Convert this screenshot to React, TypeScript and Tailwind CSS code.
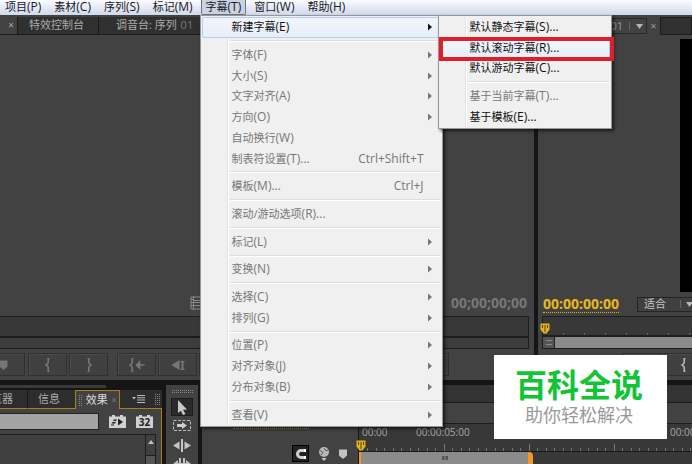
import type { ReactNode } from "react";
import clsx from "clsx";

interface Item {
  label: string;
  accel: string;
  more?: boolean;
  shortcut?: string;
  sub?: boolean;
  enabled?: boolean;
  hot?: boolean;
}

const MENUS = [
  ["项目", "P"],
  ["素材", "C"],
  ["序列", "S"],
  ["标记", "M"],
  ["字幕", "T"],
  ["窗口", "W"],
  ["帮助", "H"],
];

// null is a separator line
const TITLE_MENU: (Item | null)[] = [
  { label: "新建字幕", accel: "E", sub: true, enabled: true, hot: true },
  null,
  { label: "字体", accel: "F", sub: true },
  { label: "大小", accel: "S", sub: true },
  { label: "文字对齐", accel: "A", sub: true },
  { label: "方向", accel: "O", sub: true },
  { label: "自动换行", accel: "W" },
  { label: "制表符设置", accel: "T", more: true, shortcut: "Ctrl+Shift+T" },
  null,
  { label: "模板", accel: "M", more: true, shortcut: "Ctrl+J" },
  null,
  { label: "滚动/游动选项", accel: "R", more: true },
  null,
  { label: "标记", accel: "L", sub: true },
  null,
  { label: "变换", accel: "N", sub: true },
  null,
  { label: "选择", accel: "C", sub: true },
  { label: "排列", accel: "G", sub: true },
  null,
  { label: "位置", accel: "P", sub: true },
  { label: "对齐对象", accel: "J", sub: true },
  { label: "分布对象", accel: "B", sub: true },
  null,
  { label: "查看", accel: "V", sub: true },
];

const NEW_MENU: (Item | null)[] = [
  { label: "默认静态字幕", accel: "S", more: true, enabled: true },
  { label: "默认滚动字幕", accel: "R", more: true, enabled: true, hot: true },
  { label: "默认游动字幕", accel: "C", more: true, enabled: true },
  null,
  { label: "基于当前字幕", accel: "T", more: true },
  { label: "基于模板", accel: "E", more: true, enabled: true },
];

function MenuList({ items, className }: { items: (Item | null)[]; className: string }) {
  return (
    <div
      role="menu"
      className={clsx(
        "absolute flex flex-col border border-[#979797] bg-[#f0f0f0] p-px shadow-[2px_2px_3px_rgba(0,0,0,0.6)]",
        className
      )}
    >
      <div className="absolute inset-y-px left-[26px] w-[2px] border-l border-[#e2e2e2] bg-white" />
      {items.map((item, i) =>
        item ? (
          <button
            key={i}
            role="menuitem"
            disabled={!item.enabled}
            className={clsx(
              "relative flex flex-1 items-center rounded-xs border pr-2 pl-[29px] text-[11px] leading-4 whitespace-nowrap",
              item.enabled ? "text-[#111]" : "text-[#777]",
              item.hot ? "border-[#b4cfec] bg-linear-to-b from-[#f2f6fb] to-[#e6eef8]" : "border-transparent"
            )}
          >
            <span>{item.label}</span>
            <span className="text-xs">
              ({item.accel}){item.more && "..."}
            </span>
            {item.shortcut && <span className="mr-2 ml-auto text-xs">{item.shortcut}</span>}
            {item.sub && (
              <svg viewBox="0 0 4 8" className="ml-auto h-2 w-1 fill-current">
                <path d="M0 0.5L4 4L0 7.5z" />
              </svg>
            )}
          </button>
        ) : (
          <div key={i} className="relative ml-7 flex h-[7px] shrink-0 items-center">
            <div className="h-[2px] w-full border-t border-[#dedede] bg-white" />
          </div>
        )
      )}
    </div>
  );
}

function MenuBar() {
  return (
    <nav className="relative z-10 flex h-[15px] gap-[3px] bg-linear-to-b from-[#fbfcfe] to-[#d0d8ec]">
      {MENUS.map(([label, key]) => (
        <div key={key} className="relative">
          <button
            className={clsx(
              "flex h-[15px] items-center rounded-b-xs border-x border-b px-1 text-[11px] leading-[14px] whitespace-nowrap text-[#16181f]",
              key === "T" ? "border-[#6d7484] bg-[#cbd2e2]" : "border-transparent"
            )}
          >
            {label}
            <span className="text-xs leading-[14px]">({key})</span>
          </button>
          {key === "T" && (
            <>
              <MenuList items={TITLE_MENU} className="top-[15px] -left-px h-[412px] w-[243px]" />
              <MenuList items={NEW_MENU} className="top-[15px] left-[237px] h-[114px] w-[174px]" />
              <div className="absolute top-[37px] left-[238px] h-[24px] w-[175px] border-4 border-[#dd1f2b]" />
            </>
          )}
        </div>
      ))}
    </nav>
  );
}

function TransportButton({ children, className, label }: { children?: ReactNode; className?: string; label: string }) {
  return (
    <button
      aria-label={label}
      className={clsx(
        "flex h-[23px] w-[39px] shrink-0 items-center justify-center border border-[#303030] bg-[#404040] shadow-[inset_1px_1px_0_#4b4b4b]",
        className
      )}
    >
      {children}
    </button>
  );
}

function Bracket({ flip, arrow, bright }: { flip?: boolean; arrow?: boolean; bright?: boolean }) {
  return (
    <svg
      viewBox="0 0 16 14"
      className={clsx("h-[14px] w-4 fill-none", bright ? "stroke-[#b5b5b5]" : "stroke-[#777]", flip && "-scale-x-100")}
      strokeWidth="1.6"
    >
      <path d={arrow ? "M4.5 0.5H3.2V5L1 7L3.2 9V13.5H4.5" : "M9.5 0.5H8.2V5L6 7L8.2 9V13.5H9.5"} />
      {arrow && <path d="M8 7H15.5M10.5 4L7.5 7L10.5 10z" className="fill-[#777]" />}
    </svg>
  );
}

function Marker({ className }: { className: string }) {
  return (
    <svg viewBox="0 0 8 10" className={className}>
      <path d="M0 0.5H8V6.5L4 10L0 6.5z" />
    </svg>
  );
}

function Playhead() {
  return (
    <svg viewBox="0 0 10 11" className="h-[11px] w-[10px]">
      <path d="M0.5 0.5H9.5V6.5L6.5 10.5H3.5L0.5 6.5z" fill="#e3b21c" />
      <path d="M2.5 2V5M5 2V9M7.5 2V5" stroke="#594408" />
    </svg>
  );
}

function SourceMonitor() {
  return (
    <section className="flex min-w-0 flex-col bg-[#424242]">
      <div className="mt-[2px] flex h-[18px] shrink-0 items-center border-b border-[#1c1c1c] bg-[#303030] text-[11px] text-[#aaa]">
        <div className="flex h-full w-[18px] items-center justify-end border-r border-[#1a1a1a] bg-[#424242] pr-[3px] text-[10px]">×</div>
        <div className="flex h-full w-[81px] items-center border-r border-[#1a1a1a] pl-[11px] whitespace-nowrap">特效控制台</div>
        <div className="pl-[17px] whitespace-nowrap">
          调音台: 序列 <span className="ml-px text-[#777]">01</span>
        </div>
      </div>
      <div className="flex flex-1 items-end justify-between pr-[7px] pb-[3px] pl-[190px]">
        <svg viewBox="0 0 12 14" className="mb-[3px] h-[14px] w-3 fill-none stroke-[#888]">
          <path d="M1 1H11.5V13H1zM3.5 0.5V13.5M0.5 3.5H3.5M0.5 6.5H11.5M0.5 9.5H3.5M3.5 4.5H11.5M3.5 9.5H11.5" />
        </svg>
        <span className="text-sm font-bold text-[#777]">00;00;00;00</span>
      </div>
      <div className="mr-[5px] h-[33px] shrink-0 border border-l-0 border-[#1e1e1e] bg-[#383838] pt-[19px]">
        <div className="h-3 border-t-2 border-[#1e1e1e] bg-[#3c3c3c]" />
      </div>
      <div className="flex h-[31px] shrink-0 gap-[2px] overflow-hidden pt-1">
        <TransportButton label="标记" className="-ml-[14px] pr-1">
          <Marker className="h-[10px] w-[9px] fill-[#777]" />
        </TransportButton>
        <TransportButton label="入点" className="ml-px">
          <Bracket />
        </TransportButton>
        <TransportButton label="出点">
          <Bracket flip />
        </TransportButton>
        <TransportButton label="跳转到入点" className="ml-[7px]">
          <Bracket arrow />
        </TransportButton>
        <TransportButton label="后退">
          <svg viewBox="0 0 14 10" className="h-[10px] w-[14px] fill-[#777]">
            <path d="M8.5 0V10L0.5 5zM9.5 1H13.5V2.2H12.5V8.8H13.5V10H9.5V8.8H10.5V2.2H9.5z" />
          </svg>
        </TransportButton>
        <TransportButton label="播放" className="mr-[3px] w-[250px] shrink" />
      </div>
    </section>
  );
}

function ProgramMonitor() {
  return (
    <section className="flex min-w-0 flex-col overflow-hidden bg-[#424242]">
      <div className="mt-[2px] flex h-[18px] shrink-0 items-center text-[11px] text-[#999]">
        <div className="flex h-4 w-[109px] items-center justify-end gap-[6px] border border-[#292929] pr-[3px]">
          <span>01</span>
          <span className="h-2 w-px bg-[#666]" />
          <svg viewBox="0 0 7 5" className="h-[5px] w-[7px] fill-[#b5b5b5]">
            <path d="M0 0H7L3.5 5z" />
          </svg>
        </div>
        <div className="w-[13px] text-center">×</div>
        <div className="h-full flex-1 border border-[#1c1c1c] bg-[#303030]" />
      </div>
      <div className="mt-1 ml-[142px] flex-1 bg-black" />
      <div className="flex h-6 shrink-0 items-center pl-[5px]">
        <span className="border-b border-dotted border-[#d9a916] text-sm leading-4 font-bold text-[#e8b81c]">00:00:00:00</span>
        <button className="ml-[18px] flex h-[15px] w-[70px] shrink-0 items-center border border-[#252525] bg-[#404040] pl-[6px] text-[11px] text-[#c4c4c4]">
          适合
          <span className="ml-[14px] h-2 w-px bg-[#666]" />
          <svg viewBox="0 0 7 5" className="ml-[5px] h-[5px] w-[7px] shrink-0 fill-[#b5b5b5]">
            <path d="M0 0H7L3.5 5z" />
          </svg>
        </button>
      </div>
      <div className="relative ml-1 h-[33px] shrink-0 border border-r-0 border-[#1e1e1e] bg-[#383838]">
        <div className="absolute top-[6px] -left-[3px]">
          <Playhead />
        </div>
        <svg className="h-[19px] w-full">
          <defs>
            <pattern id="programTicks" width="21" height="19" patternUnits="userSpaceOnUse">
              <path d="M20.5 16V19" stroke="#666" />
            </pattern>
          </defs>
          <rect width="100%" height="19" fill="url(#programTicks)" />
        </svg>
        <div className="absolute inset-x-0 bottom-0 flex h-[13px] border-t-2 border-[#1e1e1e] bg-[#8a8a8a]">
          <div className="flex w-3 items-center justify-center border-r border-[#1e1e1e] bg-[#555]">
            <div className="h-[5px] w-[6px] border-y border-[#888]" />
          </div>
        </div>
      </div>
      <div className="flex h-[31px] shrink-0 gap-[2px] overflow-hidden pt-1 pl-[85px]">
        <TransportButton label="标记" />
        <TransportButton label="入点">
          <Bracket bright />
        </TransportButton>
      </div>
    </section>
  );
}

function Grip({ className }: { className: string }) {
  return (
    <svg className={className}>
      <defs>
        <pattern id="grip" width="2" height="2" patternUnits="userSpaceOnUse">
          <rect width="1" height="1" fill="#888" />
        </pattern>
      </defs>
      <rect width="100%" height="100%" fill="url(#grip)" />
    </svg>
  );
}

function EffectsPanel() {
  return (
    <section className="flex min-w-0 flex-col overflow-hidden">
      <div className="mb-[2px] h-[3px] w-[106px] shrink-0 bg-[#3a3a3a]" />
      <div className="flex h-[19px] shrink-0 bg-[#2d2d2d] text-[11px] text-[#aaa]">
        <div className="flex w-7 items-center justify-end border-r border-b border-r-[#181818] border-b-[#a87f1c] pr-[14px] whitespace-nowrap">览器</div>
        <div className="flex w-[47px] items-center border-b border-[#a87f1c] pl-[10px]">信息</div>
        <div className="flex w-[45px] items-center justify-between border border-b-0 border-[#a87f1c] bg-[#424242] pr-[2px] pl-[3px] text-[#ddd]">
          <Grip className="h-[11px] w-[3px]" />
          效果
          <span className="text-[10px] text-[#777]">×</span>
        </div>
        <div className="flex flex-1 items-center border-b border-[#a87f1c] pl-3">
          <svg viewBox="0 0 13 8" className="h-2 w-[13px] fill-[#bbb]">
            <path d="M0 2H4L2 4.5zM5 0H13V1H5zM5 2.3H13V3.3H5zM5 4.6H13V5.6H5zM5 7H13V8H5z" />
          </svg>
          <Grip className="ml-[10px] h-[11px] w-[5px]" />
        </div>
      </div>
      <div className="flex flex-1 flex-col border-r border-[#a87f1c] bg-[#424242] pt-1">
        <div className="flex h-[17px] shrink-0 items-center">
          <input aria-label="查找" className="h-[17px] w-[99px] border border-l-0 border-[#242424] bg-[#a3a3a3]" />
          <svg viewBox="0 0 17 13" className="ml-[10px] h-[13px] w-[17px]">
            <path d="M0 1.5H3V0H6V1.5H11V0H14V1.5H17V13H0z" fill="#d0d0d0" />
            <path d="M9 3.5L14 7L9 10.5zM5 4.5H8L7 6H4zM3.5 7H7L6 8.5H2.5zM2 9.5H5V10.5H2z" fill="#222" />
          </svg>
          <svg viewBox="0 0 17 13" className="ml-[10px] h-[13px] w-[17px]">
            <path d="M0 1.5H3V0H6V1.5H11V0H14V1.5H17V13H0z" fill="#d0d0d0" />
            <text x="8.5" y="11" textAnchor="middle" fontSize="10" fontWeight="bold" fill="#222">
              32
            </text>
          </svg>
        </div>
        <div className="mt-1 mr-[5px] flex flex-1 justify-end border-t border-r border-[#1e1e1e] bg-[#404040]">
          <div className="w-[10px] border-l border-[#1e1e1e]">
            <div className="flex h-[21px] justify-center border-b border-[#1e1e1e] pt-[5px]">
              <svg viewBox="0 0 6 4" className="h-1 w-[6px] fill-[#c0c0c0]">
                <path d="M3 0L6 4H0z" />
              </svg>
            </div>
            <div className="h-full bg-[#555]" />
          </div>
        </div>
      </div>
    </section>
  );
}

function Toolbox() {
  return (
    <section className="flex flex-col items-center overflow-hidden bg-[#424242] pt-[5px]">
      <Grip className="h-[3px] w-[21px] shrink-0" />
      <button aria-label="选择工具" className="mt-[5px] flex h-[18px] w-[22px] shrink-0 items-center justify-center border border-[#1c1c1c] bg-[#2a2a2a]">
        <svg viewBox="0 0 10 15" className="h-[15px] w-[10px] fill-[#c9c9c9]">
          <path d="M1 0L10 9.5L6 9.8L8.5 14L6 15L3.8 10.8L1 13z" />
        </svg>
      </button>
      <button aria-label="轨道选择工具" className="mt-1 shrink-0">
        <svg viewBox="0 0 18 11" className="h-[11px] w-[18px]">
          <rect x="0.5" y="0.5" width="17" height="10" fill="none" stroke="#bbb" strokeDasharray="3 1.5" />
          <path d="M4 4H9V2L14 5.5L9 9V7H4z" fill="#ccc" />
        </svg>
      </button>
      <button aria-label="波纹编辑工具" className="mt-2 shrink-0">
        <svg viewBox="0 0 18 13" className="h-[13px] w-[18px] fill-[#c4c4c4]">
          <path d="M8 0H10V13H8zM6.5 2.5V10.5L0 6.5zM11.5 2.5V10.5L18 6.5z" />
        </svg>
      </button>
      <button aria-label="滚动编辑工具" className="mt-[6px] shrink-0">
        <svg viewBox="0 0 18 13" className="h-[13px] w-[18px] fill-[#c4c4c4]">
          <path d="M6 0H8V13H6zM10 0H12V13H10zM0 6L5 2V5H13V2L18 6L13 10V7H5V10z" />
        </svg>
      </button>
    </section>
  );
}

function Timeline() {
  return (
    <section className="flex min-w-0 flex-col overflow-hidden bg-[#424242]">
      <div className="h-[18px] shrink-0 border-b border-[#1c1c1c] bg-[#333]" />
      <div className="h-5 shrink-0" />
      <div className="flex flex-1">
        <div className="flex w-[157px] shrink-0 flex-col border-r border-[#151515]">
          <div className="mt-1 ml-[31px] h-[2px] w-[76px] border-b border-dotted border-[#c79b1a]" />
          <div className="mt-4 ml-[90px] flex h-[17px] items-center">
            <button aria-label="吸附" className="flex h-[17px] w-[17px] items-center justify-center border border-black bg-[#222]">
              <svg viewBox="0 0 12 12" className="h-3 w-3 fill-none">
                <path d="M9 2.5H6A3.5 3.5 0 0 0 6 9.5H9" stroke="#d0d0d0" strokeWidth="3" />
                <path d="M10 1V4M10 8V11" stroke="#fff" strokeWidth="2" />
              </svg>
            </button>
            <svg viewBox="0 0 12 14" className="ml-[9px] h-[14px] w-3">
              <circle cx="6" cy="5" r="5" fill="#b8b8b8" />
              <path d="M1.5 3L5 5.5L3 8M6 1L8 4L10.5 2.5" stroke="#555" fill="none" />
              <path d="M3.5 11H8.5L6 14z" fill="#ccc" />
            </svg>
            <Marker className="ml-[9px] h-[10px] w-2 fill-[#c4c4c4]" />
          </div>
        </div>
        <div className="relative flex min-w-0 flex-1 flex-col bg-[#383838]">
          <div className="flex h-[18px] items-center overflow-hidden border-t border-[#1c1c1c] pl-[3px] text-[10px] text-[#a8a8a8]">
            <span className="w-[54px] shrink-0">00:00</span>
            <span className="w-[254px] shrink-0">00:00:05:00</span>
            <span className="shrink-0">00:00:20:00</span>
          </div>
          <svg className="h-[10px] w-full shrink-0">
            <defs>
              <pattern id="timeTicks" width="85" height="10" patternUnits="userSpaceOnUse">
                <path
                  d="M0.5 3V10M8.5 7V10M17.5 7V10M25.5 7V10M34.5 7V10M42.5 7V10M51.5 7V10M59.5 7V10M68.5 7V10M76.5 7V10"
                  stroke="#777"
                />
              </pattern>
            </defs>
            <rect width="100%" height="10" fill="url(#timeTicks)" />
          </svg>
          <div className="flex flex-1 border-t border-[#1c1c1c]">
            <div className="w-[2px] bg-[#ee9a24]" />
            <div className="flex w-[167px] items-center justify-center bg-[#8b8b8b]">
              <div className="h-1 w-[6px] border-x-2 border-[#555] bg-[#707070]" />
            </div>
            <div className="w-[5px] rounded-tr-sm bg-[#f2982a]" />
          </div>
          <div className="absolute top-[17px] -left-[3px]">
            <Playhead />
          </div>
        </div>
      </div>
    </section>
  );
}

function Watermark() {
  return (
    <div className="absolute right-[25px] bottom-[25px] z-20 flex h-[84px] w-[173px] flex-col items-center justify-center bg-white pr-[3px]">
      <div className="text-[32px] leading-9 font-bold text-[#12c435]">百科全说</div>
      <div className="text-lg leading-6 text-[#999]">助你轻松解决</div>
    </div>
  );
}

export default function App() {
  return (
    <div className="relative grid min-h-screen grid-rows-[15px_1fr_84px] overflow-hidden bg-[#151515] font-['Open_Sans','Noto_Sans_CJK_SC',sans-serif]">
      <MenuBar />
      <div className="grid grid-cols-[534px_1fr] gap-1">
        <SourceMonitor />
        <ProgramMonitor />
      </div>
      <div className="grid grid-cols-[162px_32px_1fr] gap-1 pt-[5px]">
        <EffectsPanel />
        <Toolbox />
        <Timeline />
      </div>
      <Watermark />
    </div>
  );
}
